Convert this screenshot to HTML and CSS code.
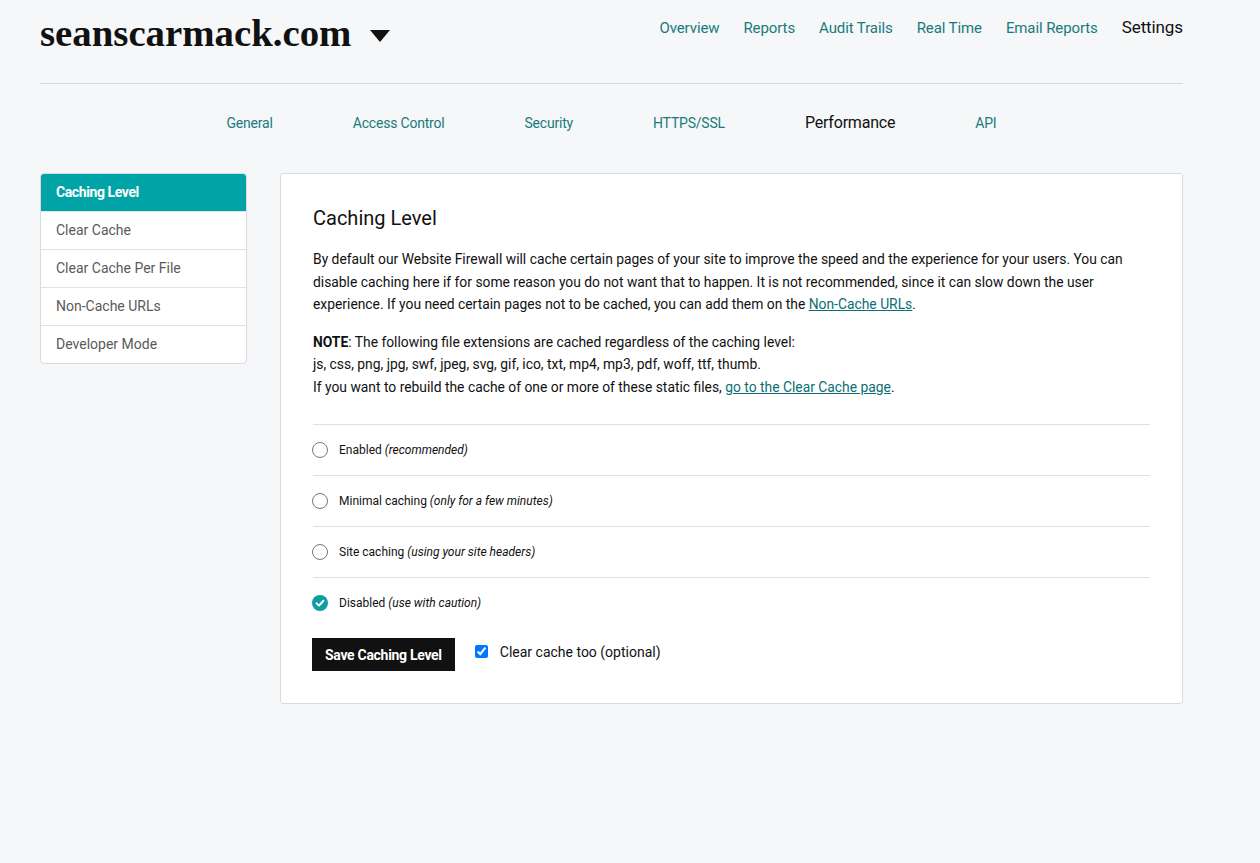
FILE: index.html
```html
<!DOCTYPE html>
<html>
<head>
<meta charset="utf-8">
<link rel="stylesheet" href="styles.css">
</head>
<body>
<div class="page">
  <header class="top">
    <div class="brand">
      <span class="logo">seanscarmack.com</span>
      <svg class="caret" width="20" height="12" viewBox="0 0 20 12"><polygon points="0,0 20,0 10,12" fill="#111"/></svg>
    </div>
    <nav class="mainnav">
      <a>Overview</a>
      <a>Reports</a>
      <a>Audit Trails</a>
      <a>Real Time</a>
      <a>Email Reports</a>
      <a class="current">Settings</a>
    </nav>
  </header>
  <nav class="subnav">
    <a>General</a>
    <a>Access Control</a>
    <a>Security</a>
    <a>HTTPS/SSL</a>
    <a class="current">Performance</a>
    <a>API</a>
  </nav>
  <div class="layout">
    <ul class="sidemenu">
      <li class="active">Caching Level</li>
      <li>Clear Cache</li>
      <li>Clear Cache Per File</li>
      <li>Non-Cache URLs</li>
      <li>Developer Mode</li>
    </ul>
    <section class="card">
      <h2>Caching Level</h2>
      <p>By default our Website Firewall will cache certain pages of your site to improve the speed and the experience for your users. You can disable caching here if for some reason you do not want that to happen. It is not recommended, since it can slow down the user experience. If you need certain pages not to be cached, you can add them on the <a class="link">Non-Cache URLs</a>.</p>
      <p><b>NOTE</b>: The following file extensions are cached regardless of the caching level:<br>js, css, png, jpg, swf, jpeg, svg, gif, ico, txt, mp4, mp3, pdf, woff, ttf, thumb.<br>If you want to rebuild the cache of one or more of these static files, <a class="link">go to the Clear Cache page</a>.</p>
      <div class="options">
        <div class="opt"><span class="radio"></span><span>Enabled <i>(recommended)</i></span></div>
        <div class="opt"><span class="radio"></span><span>Minimal caching <i>(only for a few minutes)</i></span></div>
        <div class="opt"><span class="radio"></span><span>Site caching <i>(using your site headers)</i></span></div>
        <div class="opt"><span class="radio checked"><svg width="16" height="16" viewBox="0 0 16 16"><circle cx="8" cy="8" r="8" fill="#0e9ea1"/><path d="M4.6 8.3 L7 10.6 L11.4 5.8" stroke="#fff" stroke-width="2" fill="none" stroke-linecap="round" stroke-linejoin="round"/></svg></span><span>Disabled <i>(use with caution)</i></span></div>
      </div>
      <div class="actions">
        <button class="save">Save Caching Level</button>
        <label class="chk"><input type="checkbox" checked> Clear cache too (optional)</label>
      </div>
    </section>
  </div>
</div>
</body>
</html>
```

FILE: styles.css
```css
html, body {
  margin: 0;
  padding: 0;
  background: #f5f7f8;
  font-family: Roboto, "Liberation Sans", sans-serif;
  color: #111;
}
.page {
  width: 1143px;
  margin-left: 40px;
}
.top {
  display: flex;
  justify-content: space-between;
  align-items: flex-start;
  height: 84px;
  border-bottom: 1px solid #d9d9d9;
  box-sizing: border-box;
}
.brand {
  display: flex;
  align-items: center;
  margin-top: 10px;
}
.logo {
  font-family: "Liberation Serif", serif;
  font-weight: bold;
  font-size: 38.8px;
  letter-spacing: 0;
  color: #111;
}
.caret {
  margin-left: 19px;
  margin-top: 6px;
}
.mainnav {
  display: flex;
  gap: 24px;
  margin-top: 17px;
  align-items: baseline;
}
.mainnav a {
  font-size: 15px;
  color: #1a7a7c;
  letter-spacing: -0.1px;
}
.mainnav a.current {
  font-size: 17px;
  color: #111;
}
.subnav {
  display: flex;
  justify-content: center;
  gap: 80px;
  align-items: baseline;
  padding-top: 29px;
  height: 89px;
  box-sizing: border-box;
}
.subnav a {
  font-size: 14px;
  color: #1a7a7c;
  letter-spacing: -0.2px;
}
.subnav a.current {
  font-size: 16px;
  color: #111;
}
.layout {
  display: flex;
  align-items: flex-start;
  gap: 33px;
}
.sidemenu {
  list-style: none;
  margin: 0;
  padding: 0;
  width: 207px;
  box-sizing: border-box;
  background: #fff;
  border: 1px solid #d8dcdf;
  border-radius: 4px;
  overflow: hidden;
  flex: none;
}
.sidemenu li {
  height: 38px;
  line-height: 37px;
  padding-left: 15px;
  font-size: 14px;
  color: #5a5a5a;
  border-top: 1px solid #e0e3e5;
  box-sizing: border-box;
}
.sidemenu li:first-child {
  border-top: none;
  height: 37px;
}
.sidemenu li.active {
  background: #00a4a6;
  color: #fff;
  font-weight: bold;
  letter-spacing: -0.4px;
}
.card {
  flex: 1;
  background: #fff;
  border: 1px solid #d8dcdf;
  border-radius: 3px;
  padding: 32px 32px 32px 32px;
  min-height: 530px;
  box-sizing: border-box;
}
.card h2 {
  margin: 0 0 18px;
  font-size: 20px;
  font-weight: normal;
  line-height: 24px;
}
.card p {
  margin: 0 0 15px;
  font-size: 13.85px;
  line-height: 22.5px;
}
.link {
  color: #0b6f73;
  text-decoration: underline;
}
.options {
  margin-top: 26px;
}
.opt {
  display: flex;
  align-items: center;
  height: 51px;
  border-top: 1px solid #dde1e3;
  font-size: 12px;
  box-sizing: border-box;
}
.opt i {
  font-style: italic;
}
.radio {
  width: 14px;
  height: 14px;
  border: 1px solid #777;
  border-radius: 50%;
  margin-right: 11px;
  margin-left: -1px;
  flex: none;
}
.radio.checked {
  border: none;
  width: 16px;
  height: 16px;
}
.radio svg {
  display: block;
}
.actions {
  display: flex;
  align-items: center;
  margin-top: 10px;
}
.save {
  background: #111;
  color: #fff;
  border: none;
  height: 33px;
  padding: 0 13px;
  margin-left: -1px;
  font-family: Roboto, "Liberation Sans", sans-serif;
  font-weight: bold;
  font-size: 14px;
  letter-spacing: -0.3px;
  border-radius: 0;
}
.chk {
  display: flex;
  align-items: center;
  margin-left: 17px;
  font-size: 14px;
  margin-top: -6px;
}
.chk input {
  margin: 0 12px 0 3px;
  width: 13px;
  height: 13px;
  accent-color: #0075ff;
}
```
